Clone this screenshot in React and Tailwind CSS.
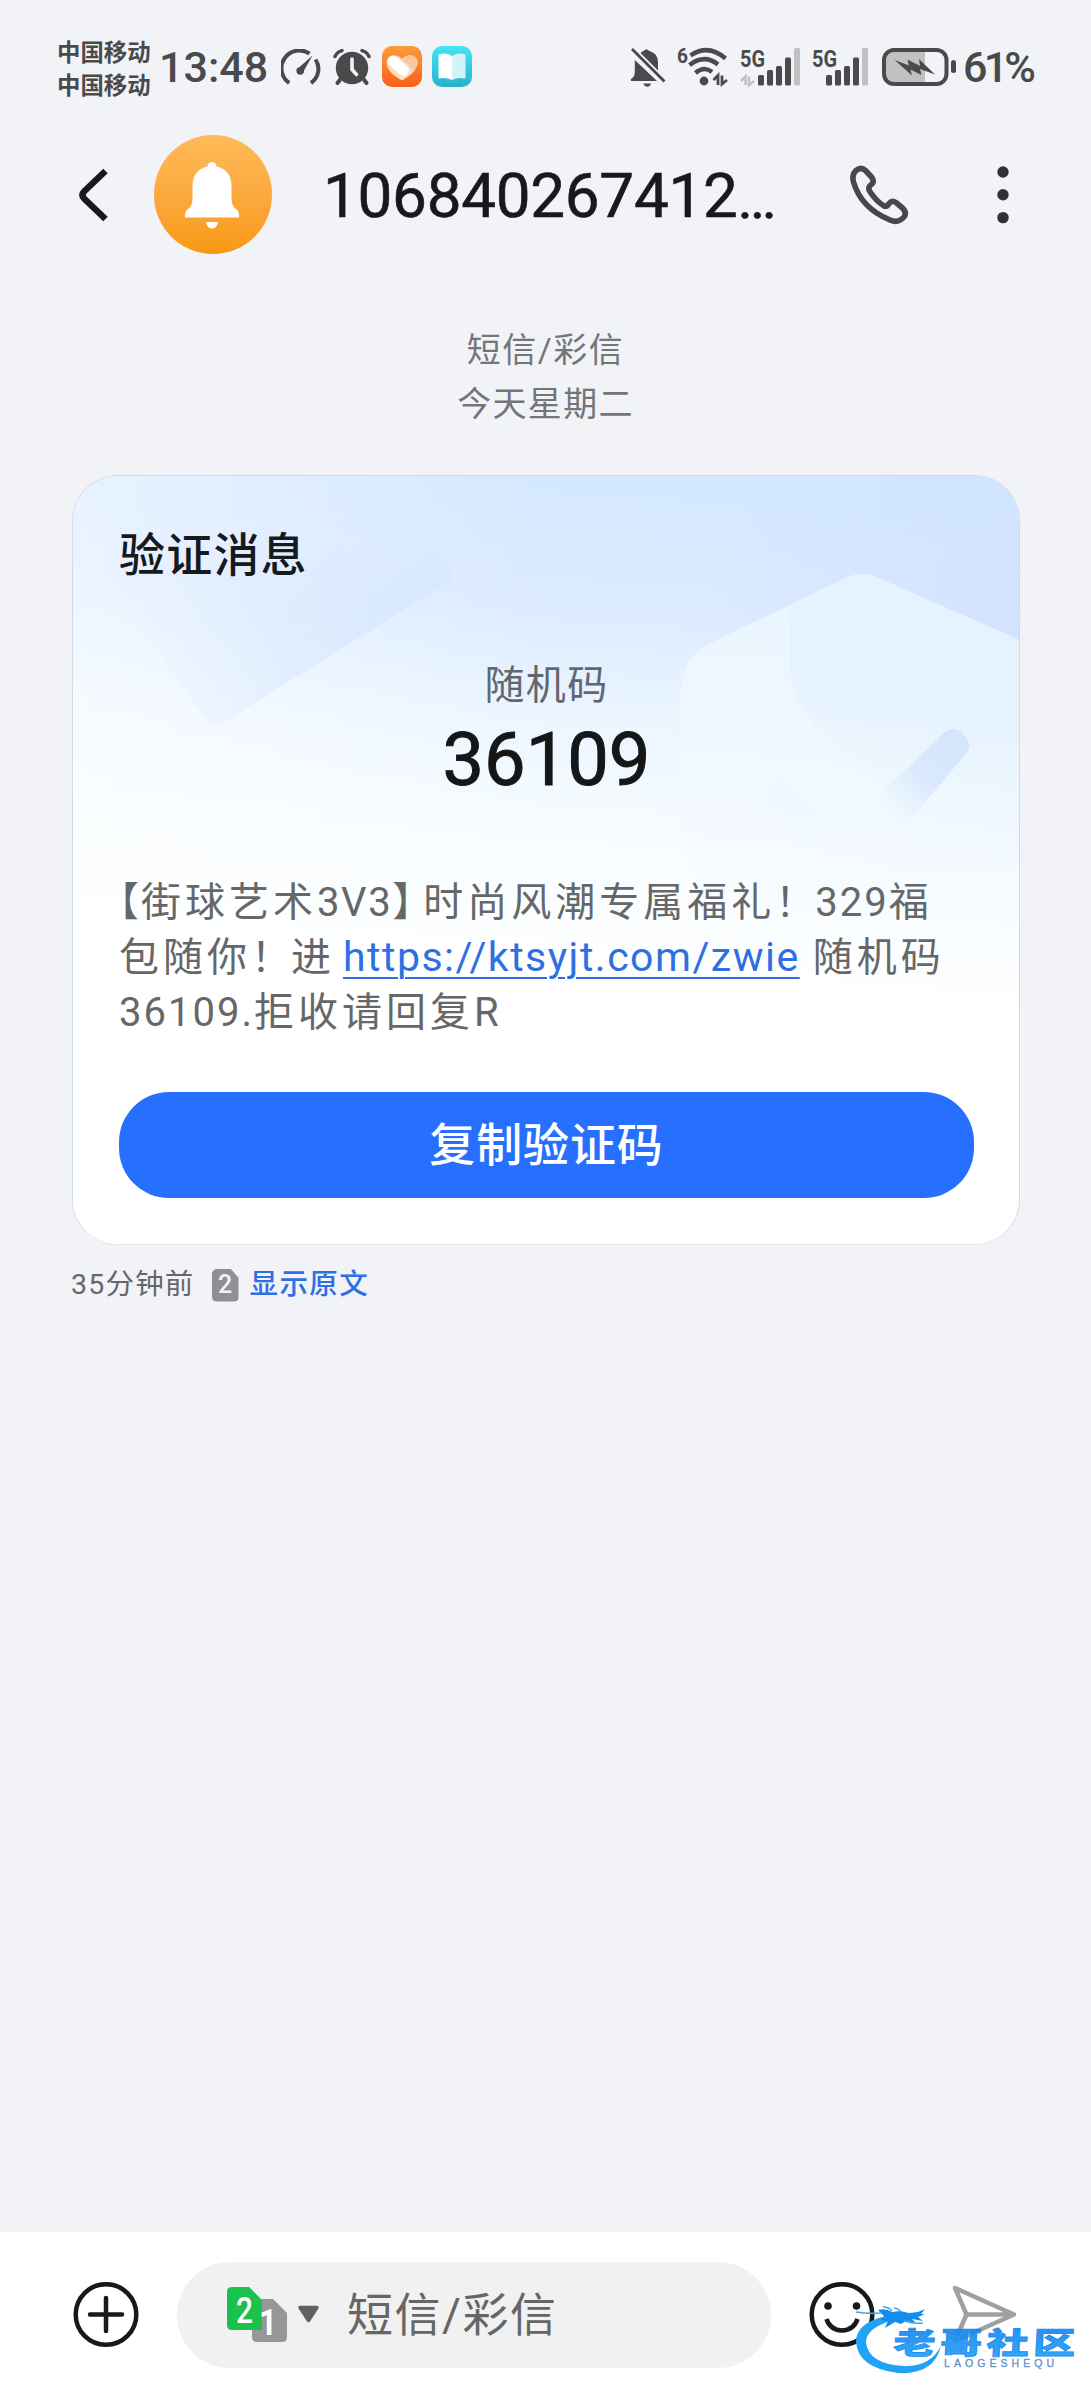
import React from 'react';

const SIGNAL_BARS = [
  { x: 18, y: 27 },
  { x: 27, y: 22 },
  { x: 36, y: 18 },
  { x: 45, y: 9.5 },
  { x: 54, y: 0 },
];

function SpeedIcon() {
  return (
    <svg viewBox="0 0 40 36" className="w-10 h-9 ml-[13px]" fill="none" stroke="#4a4a4c" strokeWidth="4">
      <path d="M8.2 34A17 17 0 0 1 28.5 4.6" />
      <path d="M34.5 10.5A17 17 0 0 1 30 34" />
      <path d="M31.5 6.5 23 21.5A3.8 3.8 0 1 1 18.3 18.3Z" fill="#4a4a4c" stroke="none" />
    </svg>
  );
}

function AlarmIcon() {
  return (
    <svg viewBox="0 0 38 38" className="w-[38px] h-[38px] ml-[12px]" fill="none" stroke="#4a4a4c" strokeLinecap="round">
      <circle cx="19" cy="20" r="16.2" fill="#4a4a4c" stroke="none" />
      <path d="M2 8.5Q4 4 9 2.6M36 8.5Q34 4 29 2.6" strokeWidth="3.4" />
      <path d="M7.5 31 4.5 35M30.5 31 33.5 35" strokeWidth="4" />
      <path d="M19 11v10.5l4.5 5" stroke="#f1f3f7" strokeWidth="3.6" strokeLinejoin="round" />
    </svg>
  );
}

function HeartAppIcon() {
  return (
    <svg viewBox="0 0 40 41" className="w-10 h-[41px] ml-[11px]">
      <defs>
        <linearGradient id="heartBg" x1="0" y1="0" x2="0" y2="1">
          <stop offset="0" stopColor="#fd9a3a" />
          <stop offset="1" stopColor="#f9601c" />
        </linearGradient>
      </defs>
      <rect width="40" height="41" rx="10" fill="url(#heartBg)" />
      <path d="M20 34.5C12 30 4.5 24 4.5 16.5 4.5 9 14 6.5 20 13 26 6.5 35.5 9 35.5 16.5 35.5 24 28 30 20 34.5Z" fill="#fddcc0" />
      <path d="M11.5 15.500 21.500 24.5" stroke="#fff" strokeWidth="11" strokeLinecap="round" />
      <path d="M20 13C26 6.5 35.5 9 35.5 16.5 35.5 19 34 22 32 24.5Z" fill="#fcc79f" />
    </svg>
  );
}

function BookAppIcon() {
  return (
    <svg viewBox="0 0 40 41" className="w-10 h-[41px] ml-[10px]">
      <defs>
        <linearGradient id="bookBg" x1="0" y1="0" x2="0" y2="1">
          <stop offset="0" stopColor="#45e4f3" />
          <stop offset="1" stopColor="#28b2cc" />
        </linearGradient>
      </defs>
      <rect width="40" height="41" rx="10" fill="url(#bookBg)" />
      <path d="M6.5 8.5Q14 6 20 10V34Q14 31 6.5 32.5Z" fill="#fff" />
      <path d="M33.5 8.5Q26 6 20 10V34Q26 31 33.5 32.5Z" fill="#d3f3f8" />
    </svg>
  );
}

function MutedIcon() {
  return (
    <svg viewBox="0 0 36 40" className="w-9 h-10" fill="#4a4a4c">
      <path d="M10.5 6Q12.5 4.2 14 3.8Q16 .5 19 3.8Q28 6.5 28 15V23.5Z" />
      <path d="M4.8 13 27 34H1V32Q4.8 30 4.8 25Z" />
      <path d="M13.5 36.5h7.5q-1 3.2-3.7 3.2t-3.8-3.2Z" />
      <path d="M2 2 34.5 34.5" stroke="#4a4a4c" strokeWidth="2.8" />
    </svg>
  );
}

function WifiIcon() {
  return (
    <svg viewBox="0 0 52 40" className="w-[52px] h-10 ml-[11px] overflow-visible" fill="none" stroke="#4a4a4c" strokeWidth="4.5">
      <text x="0" y="16" fontSize="21" fontWeight="700" fill="#4a4a4c" stroke="none" className="font-[Roboto]" textLength="11" lengthAdjust="spacingAndGlyphs">6</text>
      <path d="M13.5 8.5Q31 -3.5 48.5 11.5" />
      <path d="M12.5 18Q27.5 6.5 41 17.5" />
      <path d="M18.5 26Q27 18.5 35 25" />
      <circle cx="27" cy="34" r="4.4" fill="#4a4a4c" stroke="none" />
      <path d="M36.5 33 41 28.5V38M45 28.5V37L50 33" strokeWidth="2.8" />
    </svg>
  );
}

function SignalIcon({ dataArrows }) {
  return (
    <svg viewBox="0 0 61 38" className="w-[61px] h-[38px] ml-[11px] overflow-visible">
      <text x="0" y="18.5" fontSize="24" fontWeight="700" fill="#4a4a4c" className="font-[Roboto]" textLength="25" lengthAdjust="spacingAndGlyphs">5G</text>
      {dataArrows && (
        <path d="M1 33 5.5 28.5V37M9 28.5V37L14 33" fill="none" stroke="#c1c1c3" strokeWidth="2.6" />
      )}
      {SIGNAL_BARS.map((bar, i) => (
        <rect
          key={bar.x}
          x={dataArrows ? bar.x : bar.x - 4}
          y={bar.y}
          width="6"
          height={37.5 - bar.y}
          rx="1.5"
          fill={i === 4 ? '#c1c1c3' : '#4a4a4c'}
        />
      ))}
    </svg>
  );
}

function BatteryIcon() {
  return (
    <svg viewBox="0 0 75 38" className="w-[75px] h-[38px] ml-[9px]">
      <path d="M13 2H43V36H13Q2 36 2 25V13Q2 2 13 2Z" fill="#c1c1c3" />
      <rect x="2" y="2" width="62.5" height="34" rx="10" fill="none" stroke="#4a4a4c" strokeWidth="4" />
      <rect x="69" y="12" width="5" height="13" rx="2.5" fill="#4a4a4c" />
      <path d="M12.5 12 27 17.5 25.5 11.5 38 18 37 11 53 26.5 38 21 39.5 27 28.5 21.5 30 27.5Z" fill="#4a4a4c" />
    </svg>
  );
}

function StatusBar() {
  return (
    <div className="h-[120px] flex items-start justify-between pl-[57px] pr-[56px] text-[#4a4a4c] shrink-0">
      <div className="flex items-center h-[133px]">
        <div className="text-[23.4px] leading-[33px] font-bold w-[94px] whitespace-nowrap pt-[6px]">
          <div>中国移动</div>
          <div>中国移动</div>
        </div>
        <div className="text-[43px] leading-none font-medium ml-[8px] w-[109px] whitespace-nowrap pt-[2px]">13:48</div>
        <SpeedIcon />
        <AlarmIcon />
        <HeartAppIcon />
        <BookAppIcon />
      </div>
      <div className="flex items-center h-[133px]">
        <MutedIcon />
        <WifiIcon />
        <SignalIcon dataArrows />
        <SignalIcon />
        <BatteryIcon />
        <div className="text-[43px] leading-none font-medium ml-[6px] w-[72px] whitespace-nowrap tracking-[-3.8px] pt-[2px]">61%</div>
      </div>
    </div>
  );
}

function ChatHeader() {
  return (
    <div className="h-[149px] flex items-center pl-[77px] pr-[81px] shrink-0">
      <svg viewBox="0 0 32 56" className="w-8 h-14" fill="none" stroke="#18191b" strokeWidth="6.5" strokeLinejoin="round">
        <path d="M28.5 4 7.5 24Q3.5 28 7.5 32L28.5 52" />
      </svg>
      <div className="w-[118px] h-[119px] ml-[45px] rounded-full bg-gradient-to-b from-[#febb58] to-[#f99810] flex items-center justify-center">
        <svg viewBox="0 0 54 68" className="w-[54px] h-[68px] -ml-[2px]" fill="#fff">
          <path d="M27 1Q31 1 31.5 5.5Q46.5 9 46.5 25V37Q46.5 45 51 48Q54 50 54 53V56.5H0V53Q0 50 3 48Q7.5 45 7.5 37V25Q7.5 9 22.5 5.5Q23 1 27 1Z" />
          <path d="M21 61H33Q32 67.5 27 67.5T21 61Z" />
        </svg>
      </div>
      <h1 className="flex ml-[51px] mt-[3px] text-[62px] leading-none text-[#18191b] tracking-[-0.3px] w-[450px] whitespace-nowrap [-webkit-text-stroke:0.6px_#18191b]">
        <span>106840267412</span>
        <span className="text-[58px] tracking-normal self-end leading-none">…</span>
      </h1>
      <svg viewBox="0 0 60 60" className="w-[60px] h-[60px] ml-[76px]" fill="none" stroke="#47484a" strokeWidth="5.6" strokeLinejoin="round">
        <path d="M7 5.5Q12 1.5 16.5 5.5L22.5 12Q26 16.5 22.5 19.5Q18.5 22 20.5 26Q27 36 35 41Q38 42 40 38.5Q43 35 47 37.5L53.5 43Q58.5 48 54.5 52.5Q49 58.5 41 55Q12 43 4.5 17Q2.5 10 7 5.5Z" />
      </svg>
      <svg viewBox="0 0 12 60" className="w-3 h-[60px] ml-[88px]" fill="#303133">
        <circle cx="6" cy="7" r="5.7" />
        <circle cx="6" cy="29.8" r="5.7" />
        <circle cx="6" cy="52.6" r="5.7" />
      </svg>
    </div>
  );
}

function CardBackdrop() {
  return (
    <svg viewBox="0 0 946 768" className="absolute inset-0 w-full h-full" preserveAspectRatio="none">
      <defs>
        <linearGradient id="sky" x1="0.54" y1="0" x2="0.46" y2="1">
          <stop offset="0" stopColor="#d3e8ff" />
          <stop offset="0.16" stopColor="#dbeaff" />
          <stop offset="0.32" stopColor="#ecf6ff" />
          <stop offset="0.48" stopColor="#f8fdff" />
          <stop offset="0.65" stopColor="#fff" />
        </linearGradient>
        <linearGradient id="leftFade" x1="0" y1="0" x2="1" y2="0">
          <stop offset="0" stopColor="#fff" stopOpacity="0.45" />
          <stop offset="0.5" stopColor="#fff" stopOpacity="0" />
        </linearGradient>
        <radialGradient id="rightTint" cx="1" cy="0.5" r="0.7">
          <stop offset="0" stopColor="#cfe0ff" stopOpacity="0.7" />
          <stop offset="1" stopColor="#cfe0ff" stopOpacity="0" />
        </radialGradient>
        <linearGradient id="rhombus" gradientUnits="userSpaceOnUse" x1="380" y1="100" x2="40" y2="130">
          <stop offset="0" stopColor="#d4e6ff" stopOpacity="0.9" />
          <stop offset="0.5" stopColor="#dbeafd" stopOpacity="0.7" />
          <stop offset="1" stopColor="#e4f1ff" stopOpacity="0.1" />
        </linearGradient>
        <linearGradient id="rhombusTop" x1="0" y1="0" x2="0" y2="1">
          <stop offset="0" stopColor="#fff" stopOpacity="0" />
          <stop offset="0.25" stopColor="#fff" stopOpacity="0.15" />
          <stop offset="0.5" stopColor="#fff" />
          <stop offset="1" stopColor="#fff" stopOpacity="0.9" />
        </linearGradient>
        <mask id="rhombusMask">
          <rect width="400" height="260" fill="url(#rhombusTop)" />
        </mask>
        <linearGradient id="shield" x1="0.3" y1="0" x2="0.25" y2="1">
          <stop offset="0" stopColor="#e8f4ff" />
          <stop offset="0.35" stopColor="#f0f8ff" />
          <stop offset="0.65" stopColor="#f5fbff" stopOpacity="0.8" />
          <stop offset="1" stopColor="#fff" stopOpacity="0" />
        </linearGradient>
        <linearGradient id="shieldInner" x1="0.5" y1="0" x2="0.35" y2="1">
          <stop offset="0" stopColor="#e4f2ff" stopOpacity="0.7" />
          <stop offset="0.45" stopColor="#e2f0fe" stopOpacity="0.65" />
          <stop offset="0.9" stopColor="#eef6ff" stopOpacity="0" />
        </linearGradient>
        <linearGradient id="check" x1="1" y1="0" x2="0" y2="1">
          <stop offset="0" stopColor="#d3e5fb" />
          <stop offset="0.5" stopColor="#dae9fc" />
          <stop offset="0.9" stopColor="#eaf5ff" stopOpacity="0" />
        </linearGradient>
      </defs>
      <rect width="946" height="768" fill="url(#sky)" />
      <rect width="946" height="768" fill="url(#leftFade)" />
      <rect x="520" y="-120" width="426" height="520" fill="url(#rightTint)" />
      <path d="M30 0H330L378 95Q382 102 375 106L148 248Q140 254 135 246L38 110Z" fill="url(#rhombus)" mask="url(#rhombusMask)" />
      <path d="M946 164 810 104Q790 92 768 104L636 168Q607 183 607 222V330Q607 420 680 480L946 560Z" fill="url(#shield)" />
      <path d="M946 164 810 104Q790 92 768 104L717 129V190Q719 235 755 260L840 340 946 400Z" fill="url(#shieldInner)" />
      <path d="M800 325 870 258Q880 248 890 258L894 263Q900 271 892 279L832 350Z" fill="url(#check)" />
      <path d="M692 308Q703 298 714 307L760 352 736 376 690 330Z" fill="#eaf3ff" opacity="0.2" />
    </svg>
  );
}

function SimBadge() {
  return (
    <span className="w-[27px] h-[33px] ml-[17px] bg-[#8f9093] rounded-[5px] [clip-path:polygon(0_0,70%_0,100%_28%,100%_100%,0_100%)] flex items-center justify-center text-[#f1f3f7] text-[25px] font-medium">
      2
    </span>
  );
}

function VerificationCard() {
  return (
    <div className="relative w-[948px] h-[770px] ml-[72px] mt-[44px] rounded-[46px] border border-[#cfdbe8] border-b-[#e5e7ea] overflow-hidden bg-white shrink-0">
      <CardBackdrop />
      <div className="relative flex flex-col pl-[46px] pr-[45px]">
        <h2 className="mt-[49px] text-[46px] leading-[60px] font-medium text-[#16191d] tracking-[1.2px]">验证消息</h2>
        <div className="mt-[74px] text-[40px] leading-[54px] text-[#62676d] text-center tracking-[1.3px]">随机码</div>
        <div className="mt-[9px] text-[74px] leading-[76px] text-[#151618] text-center [-webkit-text-stroke:1px_#151618]">36109</div>
        <div className="mt-[77px] text-[40px] leading-[55px] text-[#666769] whitespace-nowrap">
          <p className="tracking-[4px]">
            <span className="[font-feature-settings:'halt'] tracking-[2px]">【</span>街球艺术
            <span className="tracking-[1.6px]">3V3</span>
            <span className="[font-feature-settings:'halt'] tracking-[11px]">】</span>时尚风潮专属福礼
            <span className="tracking-normal">！</span>
            <span className="tracking-[2px]">329</span>福
          </p>
          <p className="tracking-[4px]">
            包随你<span className="tracking-normal">！</span>进
            <a className="text-[#2f6fe4] underline decoration-2 underline-offset-[6px] ml-[8px] mr-[13px] text-[41px] tracking-[1.5px]">https://ktsyjt.com/zwie</a>随机码
          </p>
          <p className="tracking-[4px]">
            <span className="tracking-[2px]">36109.</span>拒收请回复R
          </p>
        </div>
        <button className="mt-[52px] h-[106px] rounded-[50px] bg-[#276fff] text-white text-[46px] font-medium tracking-[0.9px] flex items-center justify-center">
          复制验证码
        </button>
      </div>
    </div>
  );
}

function SimSwitch() {
  return (
    <svg viewBox="0 0 94 58" className="w-[94px] h-[58px] ml-[50px]">
      <path d="M29 13H46L60 27V51Q60 56 55 56H30Q25 56 25 51V17Q25 13 29 13Z" fill="#979797" />
      <path d="M5 1H22L35 14V44H5Q0 44 0 39V6Q0 1 5 1Z" fill="#1bc14f" />
      <text x="17.5" y="37" textAnchor="middle" fontSize="37" fontWeight="500" fill="#fff" className="font-[Roboto]" textLength="17" lengthAdjust="spacingAndGlyphs">2</text>
      <text x="41" y="49" textAnchor="middle" fontSize="37" fontWeight="700" fill="#fff" className="font-[Roboto]" textLength="18" lengthAdjust="spacingAndGlyphs">1</text>
      <path d="M73 21.5H90L81.5 34.5Z" fill="#616161" stroke="#616161" strokeWidth="3.5" strokeLinejoin="round" />
    </svg>
  );
}

function Watermark() {
  return (
    <svg viewBox="0 0 239 80" className="absolute left-[852px] top-[68px] w-[239px] h-[80px]">
      <defs>
        <linearGradient id="wm" x1="0" y1="0" x2="0" y2="1">
          <stop offset="0" stopColor="#147bea" />
          <stop offset="1" stopColor="#23a9f8" />
        </linearGradient>
      </defs>
      {/* dragon body, then head and whiskers */}
      <path d="M30 17Q4 24 4 42 6 68 46 73 82 75 89 46 78 67 52 66 16 64 14 42 14 29 38 21Z" fill="#21a2f6" />
      <path d="M26 10Q34 8 40 12L48 11 57 13 66 12 73 9 69 14 73 14 66 17 71 21 60 19 64 23 54 21 49 24 43 22 33 28 36 21 29 20 32 16Z" fill="#168bee" />
      <path d="M30 13Q16 14 4 12M40 11Q37 7 31 7M49 12Q46 8 42 8M52 21Q62 24 71 23" fill="none" stroke="#3fa9f5" strokeWidth="1.6" />
      <g transform="translate(41 54) skewX(-3) scale(1 .72)">
        <text y="0" fontSize="42" fontWeight="900" fill="url(#wm)" fillOpacity="0.92" stroke="#1c8ff0" strokeWidth="1.2" letterSpacing="4.6" className="font-['Noto_Sans_CJK_SC']">老哥社区</text>
      </g>
      <text x="92" y="67" fontSize="10.5" fill="#5b93cc" stroke="#5b93cc" strokeWidth="0.3" textLength="110" className="font-['Liberation_Sans']">LAOGESHEQU</text>
    </svg>
  );
}

function Composer() {
  return (
    <div className="relative h-[168px] bg-white flex items-start pt-[30px] pl-[73px] shrink-0">
      <svg viewBox="0 0 66 66" className="w-[66px] h-[66px] mt-[20px]" fill="none" stroke="#18191b" strokeWidth="4.5" strokeLinecap="round">
        <circle cx="33" cy="32.5" r="30.3" />
        <path d="M33 16v33M17 32.5h32" />
      </svg>
      <div className="w-[594px] h-[106px] ml-[38px] rounded-full bg-[#f1f1f1] flex items-center">
        <SimSwitch />
        <span className="ml-[26px] text-[46px] text-[#666] tracking-[1.5px] whitespace-nowrap">短信/彩信</span>
      </div>
      <svg viewBox="0 0 66 66" className="w-[66px] h-[66px] mt-[20px] ml-[38px]" fill="none" stroke="#18191b" strokeWidth="4.5">
        <circle cx="33" cy="32.5" r="30.3" />
        <path d="M17.5 37Q21 48 33 48.5 45 48 48.5 37" />
        <circle cx="19" cy="24" r="3.8" fill="#18191b" stroke="none" />
        <circle cx="47.5" cy="24" r="3.8" fill="#18191b" stroke="none" />
      </svg>
      <svg viewBox="0 0 66 62" className="w-[66px] h-[62px] mt-[21px] ml-[77px]" fill="none" stroke="#a0a0a0" strokeWidth="4.5" strokeLinejoin="round">
        <path d="M3 5 62 31.5 3 58 14.5 31.5Z" />
        <path d="M14.5 31.5H60" />
      </svg>
      <Watermark />
    </div>
  );
}

export default function App() {
  return (
    <div className="w-[1091px] h-[2400px] flex flex-col bg-[#f1f3f7] overflow-hidden font-[Roboto,'Noto_Sans_CJK_SC',sans-serif]">
      <StatusBar />
      <ChatHeader />
      <div className="mt-[54px] text-center text-[34px] leading-[54px] text-[#737578] shrink-0">
        <div className="tracking-[1.5px]">短信/彩信</div>
        <div className="tracking-[1.3px]">今天星期二</div>
      </div>
      <VerificationCard />
      <div className="flex items-center h-[40px] mt-[20px] pl-[71px] text-[28.5px] text-[#666769] whitespace-nowrap shrink-0">
        <span className="tracking-[1.2px]">35分钟前</span>
        <SimBadge />
        <span className="ml-[11px] font-medium text-[#2f6fe4] tracking-[1.4px]">显示原文</span>
      </div>
      <div className="flex-1" />
      <Composer />
    </div>
  );
}
